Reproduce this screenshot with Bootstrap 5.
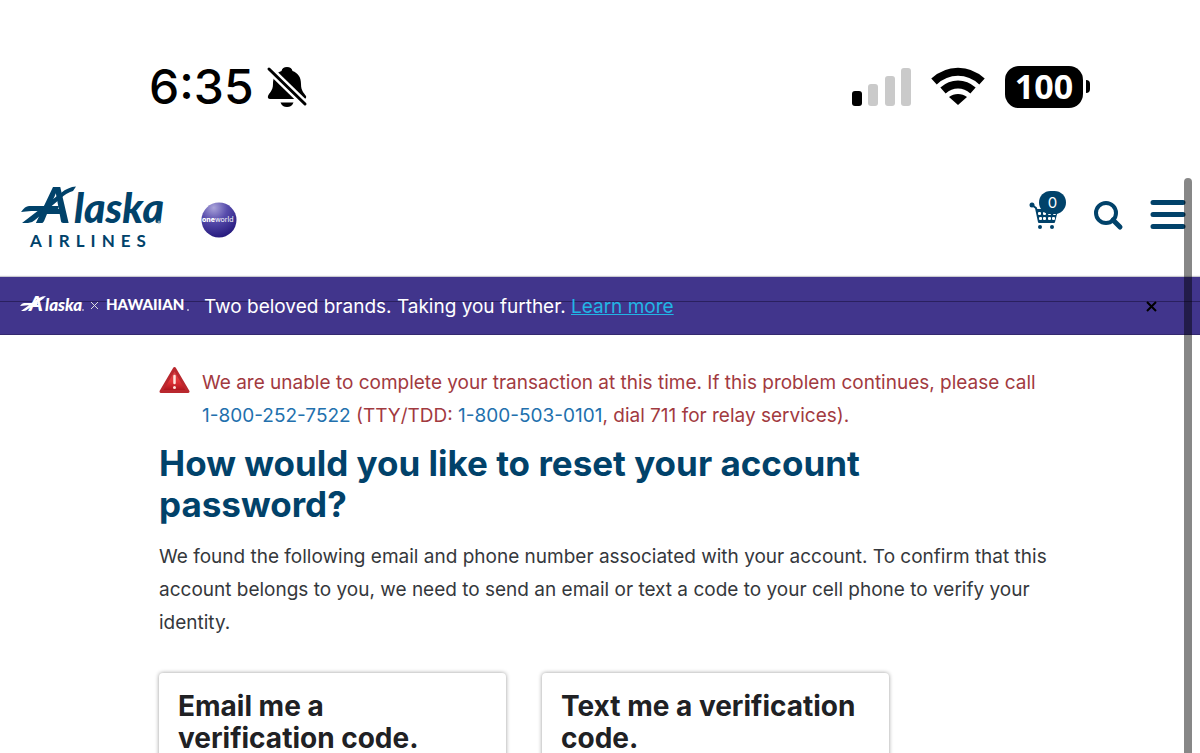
<!DOCTYPE html>
<html lang="en">
<head>
<meta charset="utf-8">
<meta name="viewport" content="width=device-width, initial-scale=1">
<title>Reset your password | Alaska Airlines</title>
<link rel="stylesheet" href="https://cdn.jsdelivr.net/npm/bootstrap@5.3.0/dist/css/bootstrap.min.css">
<style>
  :root { --navy: #01426a; --banner: #41358c; }
  body { font-family: Inter, "Liberation Sans", sans-serif; font-size: 19px; line-height: 33px; color: #35383c; background: #fff; }
  .screen { min-height: 100vh; height: 100vh; }
  .status-bar { height: 137px; padding: 36px 110px 0 149px; color: #000; }
  .clock { font-size: 48px; font-weight: 500; line-height: 50px; }
  .battery { width: 78px; height: 42px; border-radius: 14px; background: #000; color: #fff; font: 700 34px/40px "Noto Sans", sans-serif; }
  .battery-tip { width: 4px; height: 13px; border-radius: 0 6px 6px 0; background: #000; margin-left: 3px; }
  .site-header { height: 140px; padding: 49px 14px 0 20px; color: var(--navy); }
  .brand { color: var(--navy); width: 142px; height: 66px; }
  .brand-art { overflow: visible; }
  .brand-text { font-family: Lato, sans-serif; font-weight: 900; font-style: italic; }
  .globe { margin: 16px 0 0 39px; }
  .tool { color: var(--navy); border: 0; background: none; padding: 0; line-height: 0; margin-top: 14px; }
  .search-icon { margin: 1px 2px 0 11px; }
  .cart-count { top: -9px; left: 10px; width: 27px; height: 23px; border-radius: 12px; background: var(--navy); color: #fff; font-size: 15px; line-height: 23px; }
  .promo { height: 58px; padding: 0 42px 0 20px; background: linear-gradient(#2a205f, #2a205f) 0 24px / 100% 1px no-repeat, var(--banner); box-shadow: inset 0 -1px #34296f, 0 -1px 1px #c8c8d0; color: #fff; }
  .promo a { color: #21b5e5; }
  .promo-logo { margin-right: 14px; }
  .close-x { border: 0; background: none; padding: 0; line-height: 0; }
  .page-body { max-width: 882px; padding-top: 31px; }
  .notice { color: #a23a3f; }
  .notice a { color: #2270ad; text-decoration: none; }
  .page-title { color: var(--navy); font-size: 35px; line-height: 41px; font-weight: 700; margin: 11px 0 15px; }
  .intro { margin: 0 -20px 18px 0; }
  .choices { max-width: 766px; --bs-gutter-x: 36px; }
  .choice { border: 0; border-radius: 4px; box-shadow: 0 0 4px rgba(0,0,0,.4); padding: 17px 32px 17px 19px; min-height: 180px; color: #202124; }
  .choice h2 { font-size: 28px; line-height: 32px; font-weight: 700; margin: 0; }
  .scroll-thumb { top: 178px; bottom: -8px; right: 8px; width: 8px; border-radius: 4px; background: rgba(0,0,0,.47); z-index: 5; }
</style>
</head>
<body>
<div class="screen position-relative overflow-hidden">
  <div class="status-bar d-flex justify-content-between align-items-center">
    <div class="d-flex align-items-center gap-2">
      <span class="clock">6:35</span>
      <svg class="ms-1" width="42" height="44" viewBox="0 0 42 44" aria-label="Silent">
        <path fill="#000" d="M21 2c-3 0-5 1.500-5.500 4C9 8 7 13 7 19c0 7-4 9-5 12-.6 2 .5 3 2 3h34c2 0 2.500-2 2-3-2-3-5-5-5-12 0-7-3-11-8.500-13C26 3.500 24 2 21 2zM14.500 37.500h13c-1 3-3.500 4.500-6.500 4.500s-5.500-1.500-6.500-4.500z"/>
        <path d="M3 4l36 35" stroke="#fff" stroke-width="8"/><path d="M3 4l36 35" stroke="#000" stroke-width="3" stroke-linecap="round"/>
      </svg>
    </div>
    <div class="d-flex align-items-center">
      <svg width="62" height="40" viewBox="0 0 62 40" aria-label="Signal"><rect x="1" y="24" width="10" height="15" rx="3"/><g fill="#cacaca"><rect x="17" y="17" width="10" height="22" rx="3"/><rect x="34" y="9" width="10" height="30" rx="3"/><rect x="50" y="1" width="10" height="38" rx="3"/></g></svg>
      <svg class="ms-3" width="60" height="42" viewBox="0 0 60 42" aria-label="Wi-Fi"><g fill="none" stroke="#000" stroke-width="8"><path d="M5 15.500C19 2.500 39 2.500 53 15.500"/><path d="M14 24.500c9-8 21-8 30 0"/></g><path d="M20 31c5-4 13-4 18 0l-9 8z"/></svg>
      <div class="d-flex align-items-center ms-3"><span class="battery text-center">100</span><span class="battery-tip"></span></div>
    </div>
  </div>

  <header class="site-header d-flex justify-content-between align-items-start">
    <div class="d-flex align-items-start">
      <a href="#" class="brand d-block" aria-label="Alaska Airlines home">
        <svg class="brand-art" width="142" height="66" viewBox="0 0 142 66" fill="#01426a">
          <path d="M1 26q4-6 8-6h30l-2 5q-22-1-36 1zM2 37L41 7q7-6 15-6.500L53 5q-7 2-13 8L15 34q-3 3-7 3z"/>
          <text class="brand-text" x="18" y="37" font-size="49">A</text>
          <text class="brand-text" x="54" y="37" font-size="41">laska</text>
          <circle cx="139" cy="36" r="1.500" fill="#7f9fb3"/>
          <text x="10" y="61" font-family="Lato, sans-serif" font-weight="700" font-size="17" letter-spacing="6">AIRLINES</text>
        </svg>
      </a>
      <svg class="globe" width="36" height="36" viewBox="0 0 36 36">
        <defs><radialGradient id="globe" cx=".35" cy=".15" r=".85"><stop offset="0" stop-color="#aaa4da"/><stop offset=".45" stop-color="#584dac"/><stop offset="1" stop-color="#281c80"/></radialGradient></defs>
        <circle cx="18" cy="18" r="17.500" fill="url(#globe)"/>
        <text x="1" y="20" fill="#fff" font-size="7" font-family="Inter, sans-serif"><tspan font-weight="800">one</tspan>world</text>
      </svg>
    </div>
    <div class="d-flex align-items-start">
      <button class="tool position-relative" aria-label="Cart">
        <svg width="30" height="30" viewBox="0 0 30 30"><circle cx="3" cy="5" r="2.500" fill="#01426a"/><path d="M3 5l4 3 3 14h15l3-12H8" fill="#01426a" stroke="#01426a" stroke-width="2" stroke-linejoin="round"/><g fill="#fff"><rect x="9" y="12" width="3" height="3" rx="1"/><rect x="14" y="12" width="3" height="3" rx="1"/><rect x="19" y="12" width="3" height="3" rx="1"/><rect x="24" y="12" width="3" height="3" rx="1"/><rect x="10" y="17" width="3" height="3" rx="1"/><rect x="14" y="17" width="3" height="3" rx="1"/><rect x="19" y="17" width="3" height="3" rx="1"/><rect x="23" y="17" width="3" height="3" rx="1"/></g><circle cx="11" cy="27" r="2" fill="#01426a"/><circle cx="23" cy="27" r="2" fill="#01426a"/></svg>
        <span class="cart-count position-absolute">0</span>
      </button>
      <button class="tool ms-4" aria-label="Search"><svg class="search-icon" width="30" height="30" viewBox="0 0 30 30" fill="none" stroke="#01426a" stroke-width="4"><circle cx="12" cy="12" r="10"/><path d="M19 19l7 7" stroke-width="5" stroke-linecap="round"/></svg></button>
      <button class="tool ms-4" aria-label="Menu"><svg width="36" height="30" viewBox="0 0 36 30" stroke="#01426a" stroke-width="5" stroke-linecap="round"><path d="M3 2.500h30M3 14.500h30M3 26.500h30"/></svg></button>
    </div>
  </header>

  <div class="promo d-flex align-items-center justify-content-between">
    <div class="d-flex align-items-center">
      <svg width="170" height="24" viewBox="0 0 170 24" fill="#fff" class="brand-art promo-logo">
        <path d="M0 12q2-3 4-3h14l-1 2q-10 0-17 1zM1 17L19 4q3-2 7-2l-3 3L8 15q-2 2-4 2z"/>
        <text class="brand-text" x="9" y="17" font-size="21">A</text>
        <text class="brand-text" x="25" y="17" font-size="17">laska</text><circle cx="63" cy="16" r="1" opacity=".6"/>
        <path d="M71 8l7 7m0-7l-7 7" stroke="#ddd" fill="none"/>
        <text x="86" y="16" font-family="Lato, sans-serif" font-weight="900" font-size="15">HAWAIIAN</text><circle cx="168" cy="16" r="1" opacity=".7"/>
      </svg>
      <span>Two beloved brands. Taking you further. <a href="#">Learn more</a></span>
    </div>
    <button class="close-x" aria-label="Close"><svg width="13" height="13" viewBox="0 0 13 13" stroke="#000" stroke-width="2"><path d="M2 2l9 9M11 2l-9 9"/></svg></button>
  </div>

  <main class="page-body mx-auto">
    <div class="notice d-flex align-items-start">
      <svg class="flex-shrink-0" width="31" height="28" viewBox="0 0 31 28"><defs><linearGradient id="warn" x2="0" y2="1"><stop offset="0" stop-color="#cf4a4e"/><stop offset=".55" stop-color="#e23438"/><stop offset="1" stop-color="#a81019"/></linearGradient></defs><path d="M15.500 2.500L29 25.500H2z" fill="url(#warn)" stroke="#b9282e" stroke-width="3" stroke-linejoin="round"/><path d="M15.500 10v7" stroke="#ffe5dc" stroke-width="2.500" stroke-linecap="round"/><circle cx="15.500" cy="21.500" r="1.500" fill="#ffe5dc"/></svg>
      <p class="mb-0 ms-2 ps-1">We are unable to complete your transaction at this time. If this problem continues, please call <a href="#">1-800-252-7522</a> (TTY/TDD: <a href="#">1-800-503-0101</a>, dial 711 for relay services).</p>
    </div>
    <h1 class="page-title">How would you like to reset your account password?</h1>
    <p class="intro">We found the following email and phone number associated with your account. To confirm that this account belongs to you, we need to send an email or text a code to your cell phone to verify your identity.</p>
    <div class="row row-cols-2 choices pt-3">
      <div class="col"><section class="card choice"><h2>Email me a verification code.</h2></section></div>
      <div class="col"><section class="card choice"><h2>Text me a verification code.</h2></section></div>
    </div>
  </main>
  <div class="scroll-thumb position-absolute"></div>
</div>
<script src="https://cdn.jsdelivr.net/npm/bootstrap@5.3.0/dist/js/bootstrap.bundle.min.js"></script>
</body>
</html>
